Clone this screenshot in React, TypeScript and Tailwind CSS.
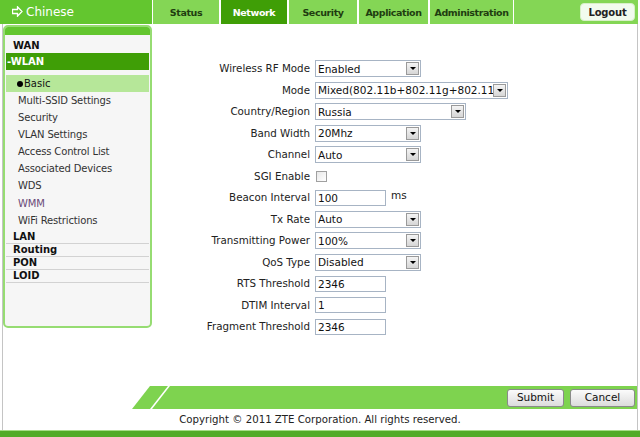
import React from "react";

const font = { fontFamily: '"DejaVu Sans", Verdana, sans-serif' };

const tabs = [
  { label: "Status", w: "w-[66px]" },
  { label: "Network", w: "w-[66px]", active: true },
  { label: "Security", w: "w-[68px]" },
  { label: "Application", w: "w-[69px]" },
  { label: "Administration", w: "w-[83px]" },
];

const subItems = [
  "Multi-SSID Settings",
  "Security",
  "VLAN Settings",
  "Access Control List",
  "Associated Devices",
  "WDS",
  "WMM",
  "WiFi Restrictions",
];

function Select({ value, w }: { value: string; w: string }) {
  return (
    <div className={`flex h-[17px] ${w} items-center border border-[#a7b4c4] bg-white`}>
      <span className="flex-1 overflow-hidden whitespace-nowrap pl-[2px] text-[10.5px] leading-none text-[#111]">
        {value}
      </span>
      <span className="mr-[1px] flex h-[13px] w-[13px] shrink-0 items-center justify-center border border-[#9a9a9a] bg-gradient-to-b from-[#f4f4f4] to-[#d6d6d6]">
        <span className="h-0 w-0 border-x-[3px] border-t-[3px] border-x-transparent border-t-black" />
      </span>
    </div>
  );
}

function TextBox({ value }: { value: string }) {
  return (
    <div className="flex h-[16px] w-[71px] items-center border border-[#a7b4c4] bg-white pl-[2px] text-[10.5px] leading-none text-[#111]">
      {value}
    </div>
  );
}

const rows: { label: string; field: React.ReactNode }[] = [
  { label: "Wireless RF Mode", field: <Select value="Enabled" w="w-[106px]" /> },
  { label: "Mode", field: <Select value="Mixed(802.11b+802.11g+802.11" w="w-[193px]" /> },
  { label: "Country/Region", field: <Select value="Russia" w="w-[151px]" /> },
  { label: "Band Width", field: <Select value="20Mhz" w="w-[106px]" /> },
  { label: "Channel", field: <Select value="Auto" w="w-[106px]" /> },
  {
    label: "SGI Enable",
    field: <div className="ml-[1px] h-[11px] w-[11px] border border-[#a0a0a0] bg-gradient-to-br from-[#e8e8e8] to-white" />,
  },
  {
    label: "Beacon Interval",
    field: (
      <div className="flex items-center gap-[5px]">
        <TextBox value="100" />
        <span className="-mt-[3px] text-[10.5px] text-[#222]">ms</span>
      </div>
    ),
  },
  { label: "Tx Rate", field: <Select value="Auto" w="w-[106px]" /> },
  { label: "Transmitting Power", field: <Select value="100%" w="w-[106px]" /> },
  { label: "QoS Type", field: <Select value="Disabled" w="w-[106px]" /> },
  { label: "RTS Threshold", field: <TextBox value="2346" /> },
  { label: "DTIM Interval", field: <TextBox value="1" /> },
  { label: "Fragment Threshold", field: <TextBox value="2346" /> },
];

export default function App() {
  return (
    <div className="relative flex h-[437px] w-[640px] flex-col overflow-hidden bg-white" style={font}>
      {/* top bar */}
      <div className="flex h-[24px] shrink-0">
        <div className="flex w-[152px] items-start gap-[3px] bg-[#63c62f] pl-[12px] pt-[5px] text-white">
          <svg width="11" height="11" viewBox="0 0 11 11" className="mt-[1px]">
            <path d="M0.5 3.5 H5.5 V0.8 L10 5.5 L5.5 10.2 V7.5 H0.5 Z" fill="none" stroke="white" strokeWidth="1.3" />
          </svg>
          <span className="text-[12px] leading-[14px]">Chinese</span>
        </div>
        {tabs.map((t) => (
          <div
            key={t.label}
            className={`flex ${t.w} items-center justify-center whitespace-nowrap pt-[3px] text-[9.5px] font-bold tracking-[-0.4px] ${
              t.active ? "bg-[#3f9e06] text-white" : "bg-[#84d655] text-[#1f3d10]"
            } ${t.label === "Status" ? "ml-[1px]" : "ml-[2px]"}`}
          >
            {t.label}
          </div>
        ))}
        <div className="ml-[1px] mr-[2px] flex flex-1 items-start justify-end bg-[#84d655] pr-[3px] pt-[3px]">
          <div className="flex h-[18px] w-[55px] items-center justify-center rounded-[4px] border border-[#d8f0c8] bg-[#f2fbee] text-[10px] font-bold tracking-[-0.2px] text-[#222]">
            Logout
          </div>
        </div>
      </div>

      {/* body */}
      <div className="mx-[2px] flex flex-1 flex-col border-x border-[#c4c4c4]">
        <div className="flex flex-1">
          {/* sidebar */}
          <div className="w-[149px] shrink-0 pt-[1px]">
            <div className="flex h-[303px] flex-col overflow-hidden rounded-[5px] border-2 border-[#96dc72] bg-[#f6f6f6]">
              <div className="h-[8px] bg-[#63c62f]" />
              <div className="px-[1px] pt-[4px] text-[10px]">
                <div className="h-[14px] pl-[7px] font-bold leading-[14px] text-[#111]">WAN</div>
                <div className="h-[17px] bg-[#3f9e06] pl-[1px] font-bold leading-[17px] text-white">-WLAN</div>
                <div className="mt-[5px] flex h-[17px] items-center bg-[#b6e799] pl-[11px] leading-[17px] text-[#111]">
                  <span className="mr-[1px] inline-block h-[6px] w-[6px] rounded-full bg-black" />
                  Basic
                </div>
                {subItems.map((s) => (
                  <div
                    key={s}
                    className={`h-[17.1px] pl-[12px] leading-[17px] tracking-[-0.15px] ${s === "WMM" ? "text-[#6a4a78]" : "text-[#333]"}`}
                  >
                    {s}
                  </div>
                ))}
                <div className="mt-[2px]">
                  {["LAN", "Routing", "PON", "LOID"].map((s) => (
                    <div key={s} className="h-[13px] border-b border-[#d2d2d2] pl-[7px] font-bold leading-[12px] text-[#111]">
                      {s}
                    </div>
                  ))}
                </div>
              </div>
            </div>
          </div>

          {/* form */}
          <div className="flex-1 pt-[34px]">
            <div className="grid grid-cols-[158px_auto] gap-x-[5px]">
              {rows.map((r) => (
                <React.Fragment key={r.label}>
                  <div className="flex h-[21.5px] items-center justify-end text-[10.3px] text-[#222]">{r.label}</div>
                  <div className="flex h-[21.5px] items-center">{r.field}</div>
                </React.Fragment>
              ))}
            </div>
          </div>
        </div>

        {/* action bar */}
        <div className="flex h-[23px] shrink-0 pl-[127px]">
          <svg width="40" height="23" viewBox="0 0 40 23" className="shrink-0">
            <polygon points="2,23 20,0 38,0 20,23" fill="#7ed34f" />
            <polygon points="22,23 40,0 40,23" fill="#7ed34f" />
          </svg>
          <div className="flex flex-1 items-center justify-end gap-[6px] bg-[#7ed34f] pr-[2px]">
            <div className="flex h-[18px] w-[57px] items-center justify-center rounded-[3px] border border-[#8a8a8a] bg-gradient-to-b from-[#fbfbfb] to-[#dcdcdc] text-[10.5px] text-[#111]">
              Submit
            </div>
            <div className="flex h-[18px] w-[65px] items-center justify-center rounded-[3px] border border-[#8a8a8a] bg-gradient-to-b from-[#fbfbfb] to-[#dcdcdc] text-[10.5px] text-[#111]">
              Cancel
            </div>
          </div>
        </div>
        <div className="flex h-[21px] shrink-0 items-center justify-center text-[10.2px] text-[#222]">
          Copyright © 2011 ZTE Corporation. All rights reserved.
        </div>
      </div>
      <div className="h-[1px] shrink-0 bg-[#a6dd86]" />
      <div className="h-[6px] shrink-0 bg-[#52ab27]" />
    </div>
  );
}
